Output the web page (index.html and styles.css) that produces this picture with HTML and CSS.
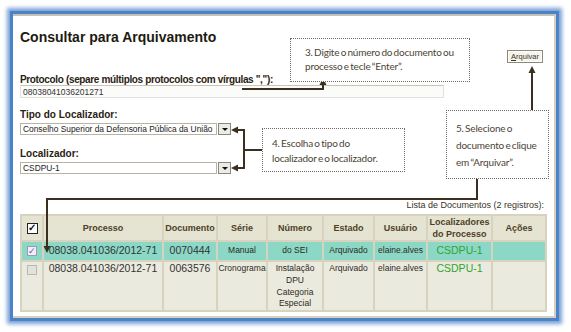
FILE: index.html
```html
<!DOCTYPE html>
<html lang="pt-BR">
<head>
  <meta charset="UTF-8">
  <meta name="viewport" content="width=device-width, initial-scale=1.0">
  <link rel="stylesheet" href="styles.css">
</head>
<body>

<div class="page">
  <div class="frame">
    <div class="panel">
      <div class="title-row">
        <h1 class="title">Consultar para Arquivamento</h1>
        <button type="button" class="btn-arquivar"><u>A</u>rquivar</button>
      </div>

      <label class="field-label label-protocolo" for="protocolo">Protocolo (separe múltiplos protocolos com vírgulas ","):</label>
      <input type="text" id="protocolo" class="text-input" value="08038041036201271">

      <label class="field-label label-tipo">Tipo do Localizador:</label>
      <div class="select">
        <span class="select-value">Conselho Superior da Defensoria Pública da União</span>
        <span class="select-btn"></span>
      </div>

      <label class="field-label label-loc">Localizador:</label>
      <div class="select">
        <span class="select-value">CSDPU-1</span>
        <span class="select-btn"></span>
      </div>

      <div class="caption">Lista de Documentos (2 registros):</div>
      <table class="docs">
        <colgroup>
          <col style="width:22px">
          <col style="width:120px">
          <col style="width:54px">
          <col style="width:50px">
          <col style="width:56px">
          <col style="width:51px">
          <col style="width:53px">
          <col style="width:65px">
          <col style="width:54px">
        </colgroup>
        <thead>
          <tr>
            <th><span class="check check-head">&#10003;</span></th>
            <th>Processo</th>
            <th>Documento</th>
            <th>Série</th>
            <th>Número</th>
            <th>Estado</th>
            <th>Usuário</th>
            <th>Localizadores<br>do Processo</th>
            <th>Ações</th>
          </tr>
        </thead>
        <tbody>
          <tr class="selected">
            <td><span class="check check-on">&#10003;</span></td>
            <td class="big">08038.041036/2012-71</td>
            <td class="big">0070444</td>
            <td>Manual</td>
            <td>do SEI</td>
            <td>Arquivado</td>
            <td>elaine.alves</td>
            <td class="big loc">CSDPU-1</td>
            <td></td>
          </tr>
          <tr class="tall">
            <td><span class="check check-off"></span></td>
            <td class="big">08038.041036/2012-71</td>
            <td class="big">0063576</td>
            <td>Cronograma</td>
            <td>Instalação<br>DPU<br>Categoria<br>Especial</td>
            <td>Arquivado</td>
            <td>elaine.alves</td>
            <td class="big loc">CSDPU-1</td>
            <td></td>
          </tr>
        </tbody>
      </table>
    </div>
  </div>

  <!-- annotations drawn over the screen -->
  <svg class="arrows" width="571" height="332" viewBox="0 0 571 332">
    <g fill="none" stroke="#3b2f1f" stroke-width="2">
      <path d="M242 89 H323 V84"/>
      <path d="M532 110 V72"/>
      <path d="M237 130 H244 V168 H237 M244 150 H262"/>
      <path d="M477 179 V199 H47 V247"/>
    </g>
    <g fill="#3b2f1f">
      <polygon points="323,78 319.5,85 326.5,85"/>
      <polygon points="532,66 528.5,73 535.5,73"/>
      <polygon points="231,130 238,126.5 238,133.5"/>
      <polygon points="231,168 238,164.5 238,171.5"/>
      <polygon points="47,253 43.5,246 50.5,246"/>
    </g>
  </svg>

  <div class="callout callout-3">3. Digite o número do documento ou<br>processo e tecle “Enter”.</div>
  <div class="callout callout-4">4. Escolha o tipo do<br>localizador e o localizador.</div>
  <div class="callout callout-5">5. Selecione o<br>documento e clique<br>em “Arquivar”.</div>
</div>

</body>
</html>
```

FILE: styles.css
```css
body {
  margin: 0;
  background: #fff;
  font-family: "Liberation Sans", Arial, sans-serif;
  color: #2e2718;
}

.page {
  position: relative;
  width: 571px;
  height: 332px;
  overflow: hidden;
}

.frame {
  box-sizing: border-box;
  width: 549px;
  height: 310px;
  margin: 11px 0 0 10px;
  border: 3px solid #4c82c8;
  box-shadow: 0 0 4px 3px rgba(76, 130, 200, 0.75);
}

.panel {
  box-sizing: border-box;
  height: 100%;
  background: #fff;
  border-top: 2px solid #c2c2ba;
  border-right: 2px solid #d8d2bc;
  border-bottom: 2px solid #d8d2bc;
  padding: 13px 8px 0 7px;
}

.title-row {
  display: flex;
  justify-content: space-between;
  align-items: flex-start;
}

.title {
  margin: 0;
  font-size: 14px;
  line-height: 17px;
  font-weight: bold;
  color: #1e1a10;
}

.btn-arquivar {
  margin: 21px 3px 0 0;
  padding: 0 3px;
  height: 13px;
  font-family: "Liberation Sans", Arial, sans-serif;
  font-size: 7.5px;
  line-height: 11px;
  color: #3a3328;
  background: #f6f4ec;
  border: 1px solid #8e8878;
  box-shadow: inset 0 0 0 1px #fff;
}

.field-label {
  display: block;
  font-size: 10px;
  line-height: 10px;
  font-weight: bold;
  color: #2a2212;
}

.label-protocolo {
  margin-top: 12px;
  letter-spacing: -0.35px;
}

.label-tipo {
  margin-top: 12px;
}

.label-loc {
  margin-top: 14px;
}

.text-input {
  display: block;
  box-sizing: border-box;
  width: 424px;
  height: 13px;
  margin: 0;
  padding: 0 2px;
  font-family: "Liberation Sans", Arial, sans-serif;
  font-size: 8.5px;
  color: #333;
  background: #fbfbf9;
  border: 1px solid #e4e2da;
  border-top-color: #c8c4b6;
}

.select {
  display: flex;
  width: 211px;
  height: 12px;
  margin-top: 3px;
}

.select-value {
  flex: 1;
  box-sizing: border-box;
  padding: 0 2px;
  font-size: 8.4px;
  line-height: 10px;
  white-space: nowrap;
  overflow: hidden;
  color: #222;
  background: #fff;
  border: 1px solid #b8b3a2;
}

.select-btn {
  position: relative;
  box-sizing: border-box;
  width: 13px;
  margin-left: 1px;
  background: #ecebe6;
  border: 1px solid #8a877e;
}

.select-btn::after {
  content: "";
  position: absolute;
  left: 3px;
  top: 4px;
  border-left: 3px solid transparent;
  border-right: 3px solid transparent;
  border-top: 3px solid #111;
}

.caption {
  margin-top: 26px;
  text-align: right;
  font-size: 9px;
  line-height: 10px;
  color: #3a3326;
  padding-right: 2px;
}

.docs {
  margin-top: 4px;
  width: 526px;
  table-layout: fixed;
  border-collapse: collapse;
  border-top: 1px solid #9fae82;
  background: #ebeade;
}

.docs th,
.docs td {
  border: 2px solid #d8d3bf;
  padding: 0;
  text-align: center;
}

.docs th {
  height: 24px;
  background: #e5e3d2;
  font-size: 9px;
  line-height: 12px;
  font-weight: bold;
  color: #4d3f26;
}

.docs td {
  vertical-align: top;
  padding-top: 2px;
  font-size: 8.5px;
  line-height: 12.5px;
  color: #2e2a20;
}

.docs tbody tr:first-child td {
  height: 16px;
}

.docs tr.tall td {
  padding-top: 1px;
  line-height: 11.8px;
}

.docs td.big {
  font-size: 10.5px;
  line-height: 13px;
  color: #333;
}

.docs td.loc {
  color: #2fa332;
}

.docs tr.selected td {
  background: #8cd8c7;
}

.check {
  display: inline-block;
  box-sizing: border-box;
  width: 10px;
  height: 10px;
  font-size: 9px;
  line-height: 8px;
  text-align: center;
  vertical-align: top;
}

.check-head {
  width: 11px;
  height: 11px;
  margin-top: 1px;
  border: 1.5px solid #222;
  background: #fff;
  color: #111;
  font-size: 10px;
}

.check-on {
  margin-top: 2px;
  border: 1px solid #9c9cac;
  background: #efeff8;
  color: #6b4cc2;
}

.check-off {
  margin-top: 2px;
  border: 1px solid #bcbab0;
  background: #e2e1db;
}

.arrows {
  position: absolute;
  left: 0;
  top: 0;
  pointer-events: none;
}

.callout {
  position: absolute;
  box-sizing: border-box;
  background: #fff;
  border: 1px dotted #6e6a60;
  font-family: Lato, "Open Sans", sans-serif;
  font-size: 10px;
  letter-spacing: -0.2px;
  word-spacing: -1px;
  color: #4c4436;
}

.callout-3 {
  left: 290px;
  top: 38px;
  width: 180px;
  height: 44px;
  padding: 6px 0 0 14px;
  line-height: 14px;
}

.callout-4 {
  left: 262px;
  top: 128px;
  width: 143px;
  height: 44px;
  padding: 7px 0 0 9px;
  line-height: 15px;
}

.callout-5 {
  left: 446px;
  top: 110px;
  width: 103px;
  height: 69px;
  padding: 9px 0 0 9px;
  line-height: 17px;
}
```
